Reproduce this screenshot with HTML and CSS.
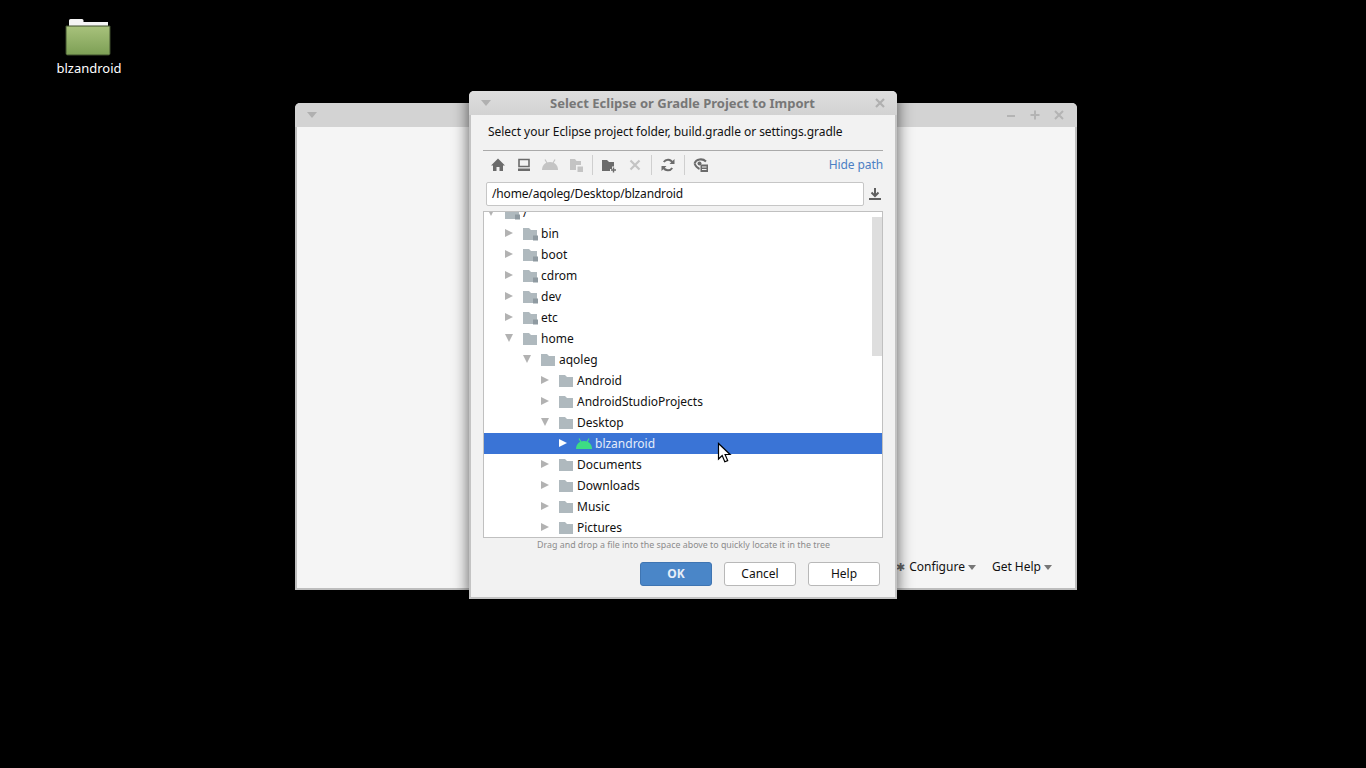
FILE: index.html
```html
<!DOCTYPE html>
<html lang="en">
<head>
<meta charset="utf-8">
<title>Select Eclipse or Gradle Project to Import</title>
<link rel="stylesheet" href="styles.css">
</head>
<body>
<svg class="defs" width="0" height="0" aria-hidden="true">
  <defs>
    <symbol id="folder" viewBox="0 0 16 14">
      <path d="M0 1h6l2 2h6v10H0z" fill="#afb9be"/>
    </symbol>
    <symbol id="folder-lock" viewBox="0 0 16 14">
      <path d="M0 1h6l2 2h6v10H0z" fill="#afb9be"/>
      <path d="M10 8.500h5V13.500h-5z" fill="#8f9aa1"/>
    </symbol>
    <symbol id="droid" viewBox="0 0 16 11">
      <path d="M0 11C0 7 2.500 3 8 3S16 7 16 11z" fill="currentColor"/>
      <path d="M3 .5l2 3.500M13 .5l-2 3.500" stroke="currentColor" stroke-width="1.200" fill="none"/>
    </symbol>
  </defs>
</svg>

<div class="desktop-icon">
  <svg class="desktop-folder" width="46" height="38" viewBox="0 0 46 38">
    <defs>
      <linearGradient id="fg" x1="0" y1="0" x2="0" y2="1">
        <stop offset="0" stop-color="#a8c27c"/>
        <stop offset="1" stop-color="#7d9f55"/>
      </linearGradient>
    </defs>
    <path d="M4 2.500Q4 1 5.500 1H17q1.500 0 1.500 1.500V4H43v4H4z" fill="#f4f4f4"/>
    <path d="M1 8h44v27.500q0 1.500-1.500 1.500h-41Q1 37 1 35.500z" fill="url(#fg)" stroke="#3f4f2c" stroke-width="1"/>
  </svg>
  <span class="desktop-label">blzandroid</span>
</div>

<section class="window back-window">
  <header class="back-title">
    <span class="title-menu"></span>
    <span class="back-controls">
      <svg width="12" height="12" viewBox="0 0 12 12"><path d="M2 7h8" stroke="#b4b4b4" stroke-width="2"/></svg>
      <svg width="12" height="12" viewBox="0 0 12 12"><path d="M1.500 6h9M6 1.500v9" stroke="#b4b4b4" stroke-width="2"/></svg>
      <svg width="12" height="12" viewBox="0 0 12 12"><path d="M2 2l8 8M10 2l-8 8" stroke="#b4b4b4" stroke-width="2"/></svg>
    </span>
  </header>
  <div class="back-body">
    <div class="back-actions">
      <span class="gear">✱</span>
      <span class="back-action">Configure<i class="caret"></i></span>
      <span class="back-action help-action">Get Help<i class="caret"></i></span>
    </div>
  </div>
</section>

<section class="window dialog">
  <header class="dialog-title">
    <span class="title-menu"></span>
    <h1>Select Eclipse or Gradle Project to Import</h1>
    <svg class="close" width="12" height="12" viewBox="0 0 12 12"><path d="M2 2l8 8M10 2l-8 8" stroke="#b0b0b0" stroke-width="2.200"/></svg>
  </header>
  <div class="dialog-body">
    <p class="prompt">Select your Eclipse project folder, build.gradle or settings.gradle</p>
    <div class="toolbar">
      <button class="tool"><svg width="16" height="16" viewBox="0 0 16 16"><path d="M8 1.500L1 8.500h2V14h3.500v-4h3v4H13V8.500h2z" fill="#6b6b6b"/></svg></button>
      <button class="tool"><svg width="16" height="16" viewBox="0 0 16 16"><path d="M3 2.500h10v7H3z" fill="none" stroke="#6b6b6b" stroke-width="1.600"/><path d="M2 11.500h12V14H2z" fill="#6b6b6b"/></svg></button>
      <button class="tool"><svg class="tool-droid" width="16" height="11"><use href="#droid"/></svg></button>
      <button class="tool"><svg width="16" height="16" viewBox="0 0 16 16"><path d="M2 2h5l1.500 2H13v4H8v5H2z" fill="#c4c4c4"/><path d="M9.500 9.500H15V15H9.500z" fill="#c4c4c4"/></svg></button>
      <span class="tool-sep"></span>
      <button class="tool"><svg width="16" height="16" viewBox="0 0 16 16"><path d="M1 3h5l2 2h5v4.500h-2V12H9v2H1z" fill="#6b6b6b"/><path d="M12.500 10.500v5M10 13h5" stroke="#6b6b6b" stroke-width="1.400"/></svg></button>
      <button class="tool"><svg width="16" height="16" viewBox="0 0 16 16"><path d="M3.500 3.500l9 9M12.500 3.500l-9 9" stroke="#c4c4c4" stroke-width="2.200"/></svg></button>
      <span class="tool-sep"></span>
      <button class="tool"><svg width="16" height="16" viewBox="0 0 16 16"><path d="M12.500 5.500A5 5 0 0 0 3.800 5M3.500 10.500a5 5 0 0 0 8.700.5" fill="none" stroke="#6b6b6b" stroke-width="2"/><path d="M14.500 2v5h-5zM1.500 14v-5h5z" fill="#6b6b6b"/></svg></button>
      <span class="tool-sep"></span>
      <button class="tool"><svg width="16" height="16" viewBox="0 0 16 16"><path d="M1.500 6.500C3 2 9.500 1 13 4.500" fill="none" stroke="#6b6b6b" stroke-width="2"/><path d="M1.500 6.500C2.500 9 4 11 6.500 12" fill="none" stroke="#6b6b6b" stroke-width="2"/><circle cx="6.500" cy="6.500" r="2" fill="#6b6b6b"/><path d="M7.500 7.500H15V15H7.500z" fill="#6b6b6b"/><path d="M9 10h4.500M9 12.500h4.500" stroke="#f2f2f2"/></svg></button>
      <a class="hide-path">Hide path</a>
    </div>
    <div class="path-row">
      <div class="path-field">/home/aqoleg/Desktop/blzandroid</div>
      <svg class="path-dl" width="14" height="14" viewBox="0 0 14 14"><path d="M7 1v7M3.500 5.500L7 9l3.500-3.500" fill="none" stroke="#5f5f5f" stroke-width="2"/><path d="M1 12h12" stroke="#5f5f5f" stroke-width="2"/></svg>
    </div>
    <div class="tree">
      <div class="tree-scroll">
        <div class="row d0"><i class="arrow down"></i><svg class="ico"><use href="#folder-lock"/></svg><span>/</span></div>
        <div class="row d1"><i class="arrow"></i><svg class="ico"><use href="#folder-lock"/></svg><span>bin</span></div>
        <div class="row d1"><i class="arrow"></i><svg class="ico"><use href="#folder-lock"/></svg><span>boot</span></div>
        <div class="row d1"><i class="arrow"></i><svg class="ico"><use href="#folder-lock"/></svg><span>cdrom</span></div>
        <div class="row d1"><i class="arrow"></i><svg class="ico"><use href="#folder-lock"/></svg><span>dev</span></div>
        <div class="row d1"><i class="arrow"></i><svg class="ico"><use href="#folder-lock"/></svg><span>etc</span></div>
        <div class="row d1"><i class="arrow down"></i><svg class="ico"><use href="#folder"/></svg><span>home</span></div>
        <div class="row d2"><i class="arrow down"></i><svg class="ico"><use href="#folder"/></svg><span>aqoleg</span></div>
        <div class="row d3"><i class="arrow"></i><svg class="ico"><use href="#folder"/></svg><span>Android</span></div>
        <div class="row d3"><i class="arrow"></i><svg class="ico"><use href="#folder"/></svg><span>AndroidStudioProjects</span></div>
        <div class="row d3"><i class="arrow down"></i><svg class="ico"><use href="#folder"/></svg><span>Desktop</span></div>
        <div class="row d4 selected"><i class="arrow"></i><svg class="ico droid"><use href="#droid"/></svg><span>blzandroid</span></div>
        <div class="row d3"><i class="arrow"></i><svg class="ico"><use href="#folder"/></svg><span>Documents</span></div>
        <div class="row d3"><i class="arrow"></i><svg class="ico"><use href="#folder"/></svg><span>Downloads</span></div>
        <div class="row d3"><i class="arrow"></i><svg class="ico"><use href="#folder"/></svg><span>Music</span></div>
        <div class="row d3"><i class="arrow"></i><svg class="ico"><use href="#folder"/></svg><span>Pictures</span></div>
      </div>
      <div class="scroll-thumb"></div>
    </div>
    <p class="hint">Drag and drop a file into the space above to quickly locate it in the tree</p>
    <div class="buttons">
      <button class="btn primary">OK</button>
      <button class="btn">Cancel</button>
      <button class="btn">Help</button>
    </div>
  </div>
</section>

<svg class="cursor" width="15" height="22" viewBox="0 0 15 22">
  <path d="M1.500 1.500v15.500l3.700-3.500 2.600 6.300 2.900-1.200-2.600-6.100h5z" fill="#fff" stroke="#000" stroke-width="1.200"/>
</svg>
</body>
</html>
```
FILE: styles.css
```css
* { box-sizing: border-box; }
html, body { margin: 0; height: 100%; }
body {
  position: relative;
  width: 1366px;
  height: 768px;
  overflow: hidden;
  background: #000;
  font-family: "Noto Sans", sans-serif;
  font-size: 12px;
  color: #111;
}
.defs { position: absolute; }
.desktop-icon {
  position: absolute;
  left: 49px;
  top: 18px;
  width: 80px;
  display: flex;
  flex-direction: column;
  align-items: center;
}
.desktop-folder { display: block; margin-right: 2px; }
.desktop-label { color: #fff; font-size: 13px; line-height: 18px; margin-top: 3px; }

.window { position: absolute; }
.title-menu {
  width: 0;
  height: 0;
  border-left: 5px solid transparent;
  border-right: 5px solid transparent;
  border-top: 6px solid #b0b0b0;
  flex: none;
}

.back-window {
  left: 295px;
  top: 103px;
  width: 782px;
  height: 487px;
  display: flex;
  flex-direction: column;
  background: #bdbdbd;
  padding: 0 2px 2px;
  border-radius: 5px 5px 0 0;
}
.back-title {
  height: 24px;
  margin: 0 -2px;
  padding: 0 12px 0 12px;
  background: #d3d3d3;
  border-radius: 5px 5px 0 0;
  display: flex;
  align-items: center;
  justify-content: space-between;
  flex: none;
}
.back-controls { display: flex; gap: 12px; }
.back-controls svg { display: block; }
.back-body {
  flex: 1;
  background: #f5f5f5;
  display: flex;
  flex-direction: column;
  justify-content: flex-end;
  align-items: flex-end;
  padding: 0 23px 12px 0;
}
.back-actions { display: flex; align-items: center; height: 18px; line-height: 18px; }
.gear { color: #666; font-size: 11px; margin-right: 4px; }
.back-action { display: flex; align-items: center; }
.help-action { margin-left: 16px; }
.caret {
  width: 0;
  height: 0;
  margin-left: 3px;
  border-left: 4.500px solid transparent;
  border-right: 4.500px solid transparent;
  border-top: 5px solid #777;
}

.dialog {
  left: 469px;
  top: 91px;
  width: 428px;
  height: 508px;
  display: flex;
  flex-direction: column;
  background: #c4c4c4;
  padding: 0 2px 2px;
  border-radius: 5px 5px 0 0;
  box-shadow: 0 0 16px rgba(0, 0, 0, .65);
}
.dialog-title {
  height: 24px;
  margin: 0 -2px;
  padding: 0 11px 0 12px;
  background: linear-gradient(#dedede, #d2d2d2);
  border-radius: 5px 5px 0 0;
  display: flex;
  align-items: center;
  flex: none;
}
.dialog-title h1 {
  flex: 1;
  margin: 0;
  font-size: 13px;
  font-weight: 700;
  text-align: center;
  color: #777;
  line-height: 28px;
}
.close { display: block; flex: none; }
.dialog-body {
  flex: 1;
  background: #f2f2f2;
  padding: 0 12px 0 12px;
  display: flex;
  flex-direction: column;
}
.prompt {
  margin: 0;
  height: 36px;
  padding: 8px 0 0 5px;
  line-height: 17px;
  letter-spacing: -.045px;
  border-bottom: 1px solid #aaa;
  flex: none;
}
.toolbar {
  height: 31px;
  display: flex;
  align-items: center;
  padding: 0 0 4px 2px;
  flex: none;
}
.tool {
  width: 26px;
  height: 22px;
  padding: 0;
  border: 0;
  background: none;
  display: flex;
  align-items: center;
  justify-content: center;
}
.tool-droid { color: #c4c4c4; }
.tool-sep { width: 1px; height: 20px; background: #cfcfcf; margin: 0 3px; }
.hide-path { margin-left: auto; color: #4b7fc4; font-size: 12px; line-height: 18px; letter-spacing: -.1px; }
.path-row { display: flex; align-items: center; height: 24px; margin-bottom: 5px; padding-left: 3px; flex: none; }
.path-field {
  width: 378px;
  height: 24px;
  padding: 0 5px;
  background: #fff;
  border: 1px solid #c6c6c6;
  border-radius: 2px;
  line-height: 22px;
  letter-spacing: -.16px;
}
.path-dl { margin-left: 4px; display: block; }
.tree {
  position: relative;
  width: 400px;
  height: 327px;
  flex: none;
  background: #fff;
  border: 1px solid #c0c0c0;
  overflow: hidden;
}
.tree-scroll { margin-top: -10px; }
.row {
  display: flex;
  align-items: center;
  height: 21px;
  line-height: 21px;
}
.d0 { padding-left: 3px; }
.d1 { padding-left: 21px; }
.d2 { padding-left: 39px; }
.d3 { padding-left: 57px; }
.d4 { padding-left: 75px; }
.arrow {
  width: 18px;
  height: 10px;
  flex: none;
  position: relative;
}
.arrow::before {
  content: "";
  display: block;
  width: 0;
  height: 0;
  border-top: 4.500px solid transparent;
  border-bottom: 4.500px solid transparent;
  border-left: 8px solid #b2b2b2;
  margin-top: .5px;
}
.arrow.down::before {
  border-left: 4.500px solid transparent;
  border-right: 4.500px solid transparent;
  border-top: 8px solid #b2b2b2;
  border-bottom: 0;
  margin-top: 0;
}
.ico { width: 16px; height: 14px; margin-right: 2px; flex: none; display: block; }
.ico.droid { height: 11px; color: #3ddc84; margin-left: -1px; margin-right: 3px; }
.selected { background: #3a74d6; color: #e4ecfa; }
.selected .arrow::before { border-left-color: #fff; }
.scroll-thumb {
  position: absolute;
  right: 0;
  top: 5px;
  width: 10px;
  height: 139px;
  background: #dedede;
}
.hint {
  margin: 0;
  height: 16px;
  padding-left: 1px;
  line-height: 14px;
  font-size: 8.850px;
  text-align: center;
  color: #8c8c8c;
  flex: none;
}
.buttons {
  display: flex;
  justify-content: flex-end;
  gap: 12px;
  padding: 8px 3px 0 0;
}
.btn {
  width: 72px;
  height: 24px;
  padding: 0;
  font: 12px/22px "Noto Sans", sans-serif;
  color: #111;
  background: #fff;
  border: 1px solid #b8b8b8;
  border-radius: 3px;
}
.btn.primary {
  background: #4a86c8;
  border-color: #3f75b2;
  color: #e6eef8;
  font-weight: 700;
}
.cursor { position: absolute; left: 717px; top: 442px; }
```
